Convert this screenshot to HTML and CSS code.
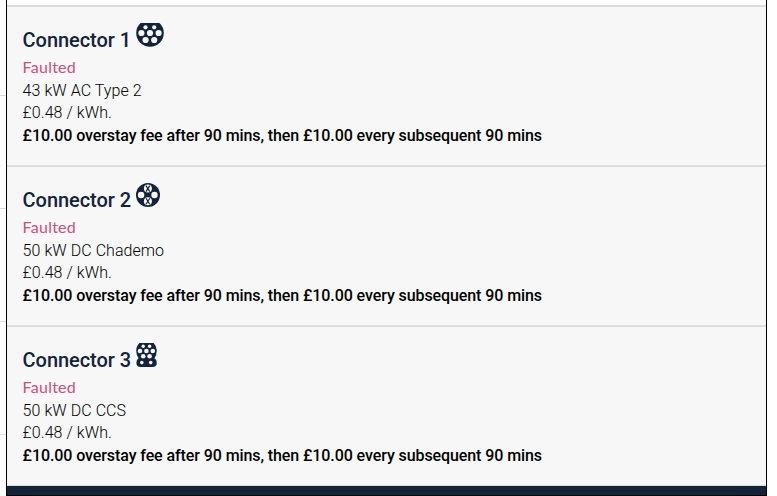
FILE: index.html
```
<!DOCTYPE html>
<html lang="en">
<head>
    <meta charset="UTF-8">
    <meta name="viewport" content="width=device-width, initial-scale=1.0">
    <title>Connectors</title>
    <link rel="stylesheet" href="styles.css">
</head>
<body>
    <div class="gutter">
        <div class="gutter-row first"></div>
        <div class="gutter-row"></div>
        <div class="gutter-row"></div>
        <div class="gutter-row"></div>
    </div>

    <div class="panel">
        <div class="panel-top"></div>

        <div class="connector">
            <h2 class="connector-title">Connector 1
                <svg class="icon" width="28" height="24" viewBox="0 0 28 24">
                    <path fill="#12233a" d="M4.6 0H23.4A13.8 13.8 0 0 1 27.8 10A13.8 13.8 0 0 1 .2 10A13.8 13.8 0 0 1 4.6 0Z"/>
                    <g fill="#f7f7f7">
                        <circle cx="9.5" cy="4.3" r="2.1"/>
                        <circle cx="18.2" cy="4.3" r="2.1"/>
                        <circle cx="5.4" cy="10" r="3.1"/>
                        <circle cx="14" cy="10" r="3.1"/>
                        <circle cx="22.6" cy="10" r="3.1"/>
                        <circle cx="9.6" cy="17" r="3.1"/>
                        <circle cx="18.2" cy="17" r="3.1"/>
                    </g>
                </svg>
            </h2>
            <div class="status">Faulted</div>
            <div class="detail">43 kW AC Type 2</div>
            <div class="detail">£0.48 / kWh.</div>
            <div class="overstay">£10.00 overstay fee after 90 mins, then £10.00 every subsequent 90 mins</div>
        </div>

        <div class="connector">
            <h2 class="connector-title">Connector 2
                <svg class="icon" width="24" height="24" viewBox="0 0 24 24">
                    <circle fill="#12233a" cx="12" cy="12" r="12"/>
                    <g fill="#f7f7f7">
                        <circle cx="5.1" cy="12" r="3.2"/>
                        <circle cx="18.5" cy="12" r="3.2"/>
                        <circle cx="11.9" cy="5.6" r="4"/>
                        <circle cx="11.9" cy="18.2" r="4"/>
                    </g>
                    <path stroke="#12233a" stroke-width="1.2" fill="none" d="M10 2.6L13.8 8.6M13.8 2.6L10 8.6M10 15.2L13.8 21.2M13.8 15.2L10 21.2"/>
                </svg>
            </h2>
            <div class="status">Faulted</div>
            <div class="detail">50 kW DC Chademo</div>
            <div class="detail">£0.48 / kWh.</div>
            <div class="overstay">£10.00 overstay fee after 90 mins, then £10.00 every subsequent 90 mins</div>
        </div>

        <div class="connector">
            <h2 class="connector-title">Connector 3
                <svg class="icon" width="21" height="24" viewBox="0 0 21 24">
                    <path fill="#12233a" d="M3.4 0H17.6Q20.8 3.2 20.8 7.5Q20.8 12 18.4 15.2Q20.8 16.4 20.8 19.7Q20.8 24 16.4 24H4.8Q.4 24 .4 19.7Q.4 16.4 2.6 15.2Q.2 12 .2 7.5Q.2 3.2 3.4 0Z"/>
                    <g fill="#f7f7f7">
                        <circle cx="7.2" cy="3.3" r="1.7"/>
                        <circle cx="13.6" cy="3.3" r="1.7"/>
                        <circle cx="4" cy="8" r="2.3"/>
                        <circle cx="10.4" cy="8" r="2.3"/>
                        <circle cx="16.8" cy="8" r="2.3"/>
                        <circle cx="7.2" cy="13.2" r="2.3"/>
                        <circle cx="13.6" cy="13.2" r="2.3"/>
                        <circle cx="5.8" cy="19.6" r="1.8"/>
                        <circle cx="14.7" cy="19.6" r="1.8"/>
                    </g>
                </svg>
            </h2>
            <div class="status">Faulted</div>
            <div class="detail">50 kW DC CCS</div>
            <div class="detail">£0.48 / kWh.</div>
            <div class="overstay">£10.00 overstay fee after 90 mins, then £10.00 every subsequent 90 mins</div>
        </div>

        <div class="panel-footer"></div>
    </div>
</body>
</html>
```
FILE: styles.css
```
* {
    box-sizing: border-box;
}
body {
    margin: 0;
    height: 496px;
    display: flex;
    overflow: hidden;
    background: white;
    font-family: Roboto, sans-serif;
    font-size: 16px;
    color: black;
}
.gutter {
    width: 6px;
}
.gutter-row {
    height: 113px;
    border-bottom: 1px solid #ddd;
}
.gutter-row.first {
    height: 96px;
}
.panel {
    width: 761px;
    height: 496px;
    display: flex;
    flex-direction: column;
    border: 1px solid black;
    border-top: none;
}
.panel-top {
    height: 5px;
}
.connector {
    height: 160px;
    padding: 16px 15.6px 0;
    background: #f7f7f7;
    border-top: 2px solid #dcdcdc;
}
.connector-title {
    display: flex;
    align-items: flex-start;
    gap: 5px;
    height: 34px;
    margin: 0;
    font-size: 20px;
    font-weight: 500;
    line-height: 34px;
    letter-spacing: -0.06px;
    color: #12233a;
}
.status {
    height: 22px;
    font-family: Lato, sans-serif;
    line-height: 20px;
    letter-spacing: 0.25px;
    color: #c9507a;
}
.detail {
    height: 22px;
    font-weight: 300;
    line-height: 24px;
    letter-spacing: 0.06px;
}
.overstay {
    height: 24px;
    font-weight: 500;
    line-height: 26px;
    letter-spacing: -0.09px;
}
.panel-footer {
    flex: 1;
    background: #12233a;
    border-top: 1px solid #dcdcdc;
}
```
